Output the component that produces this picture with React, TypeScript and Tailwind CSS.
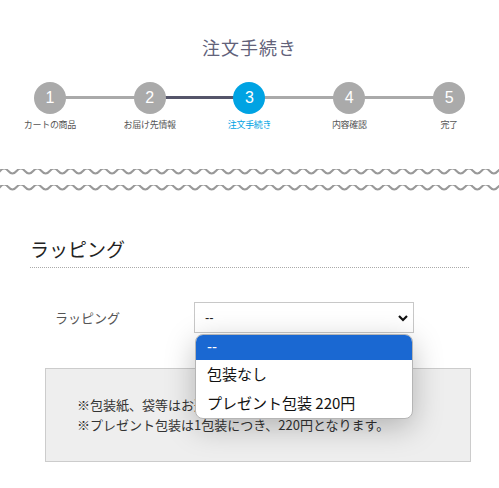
import React from "react";

const steps = ["カートの商品", "お届け先情報", "注文手続き", "内容確認", "完了"];

function Wave() {
  const n = 32;
  let d = `M -8.3 0`;
  for (let i = 0; i < n * 2; i++) {
    d += ` q 4.15 ${i % 2 === 0 ? 5 : -5} 8.3 0`;
  }
  return (
    <svg width="499" height="8" viewBox="0 -1.5 499 8" className="block">
      <path d={d} fill="none" stroke="#999" strokeWidth="2" transform="translate(0,0.5)" />
    </svg>
  );
}

export default function App() {
  return (
    <div
      className="w-[499px] h-[488px] bg-white overflow-hidden relative"
      style={{ fontFamily: '"Noto Sans CJK JP", "Noto Sans", sans-serif' }}
    >
      <h1 className="pt-[35px] text-center text-[18px] leading-[24px] text-[#62627a] tracking-[1px]">
        注文手続き
      </h1>

      <div className="mt-[23px] grid grid-cols-5">
        {steps.map((s, i) => {
          const active = i === 2;
          return (
            <div key={s} className="relative flex flex-col items-center">
              {i > 0 && (
                <div
                  className={`absolute left-0 right-1/2 top-[14px] h-[3px] ${
                    i === 2 ? "bg-[#55556a]" : "bg-[#aaaaaa]"
                  }`}
                />
              )}
              {i < 4 && (
                <div
                  className={`absolute left-1/2 right-0 top-[14px] h-[3px] ${
                    i === 1 ? "bg-[#55556a]" : "bg-[#aaaaaa]"
                  }`}
                />
              )}
              <div
                className={`relative z-10 w-[32px] h-[32px] rounded-full flex items-center justify-center text-white text-[16px] ${
                  active ? "bg-[#00a3e3]" : "bg-[#aaaaaa]"
                }`}
                style={{ fontFamily: '"Liberation Sans", Arial, sans-serif' }}
              >
                {i + 1}
              </div>
              <div
                className={`mt-[5px] text-[9px] leading-[11px] tracking-[-0.3px] ${
                  active ? "text-[#00a3e3]" : "text-[#555555]"
                }`}
              >
                {s}
              </div>
            </div>
          );
        })}
      </div>

      <div className="mt-[39px] flex flex-col gap-[8px]">
        <Wave />
        <Wave />
      </div>

      <div className="mx-[30px] mt-[43px] pb-[5px] border-b border-dotted border-[#aaaaaa]">
        <h2 className="text-[19px] leading-[26px] text-[#222222]">ラッピング</h2>
      </div>

      <div className="mt-[34px] flex items-center">
        <div className="w-[194px] pl-[55px] text-[13px] text-[#555555]">ラッピング</div>
        <div className="relative">
          <div
            className="w-[220px] h-[31px] border border-[#c8c8c8] bg-white flex items-center justify-between pl-[10px] pr-[4px] text-[13px] text-[#222]"
            style={{ fontFamily: '"Liberation Sans", Arial, sans-serif' }}
          >
            <span>--</span>
            <svg width="12" height="12" viewBox="0 0 12 12">
              <path d="M2 4 L6 8 L10 4" fill="none" stroke="#111" strokeWidth="2.2" />
            </svg>
          </div>
          <div
            className="absolute left-[1px] top-[32px] w-[218px] z-20 bg-white rounded-[8px] overflow-hidden border border-[#b5b5b5] shadow-[0_8px_30px_rgba(0,0,0,0.25)] text-[15px] text-[#111]"
          >
            <div
              className="h-[25px] bg-[#1a68d2] text-white flex items-center pl-[11px]"
              style={{ fontFamily: '"Liberation Sans", Arial, sans-serif' }}
            >
              --
            </div>
            <div className="h-[29px] flex items-center pl-[11px]">包装なし</div>
            <div className="h-[29px] flex items-center pl-[11px]">プレゼント包装 220円</div>
          </div>
        </div>
      </div>

      <div className="mx-[45px] mt-[35px] w-[426px] h-[94px] bg-[#eeeeee] border border-[#cccccc] pl-[31px] pt-[26px] text-[13px] leading-[20px] text-[#333333]">
        <p>※包装紙、袋等はお選びいただけません。</p>
        <p>※プレゼント包装は1包装につき、220円となります。</p>
      </div>
    </div>
  );
}
